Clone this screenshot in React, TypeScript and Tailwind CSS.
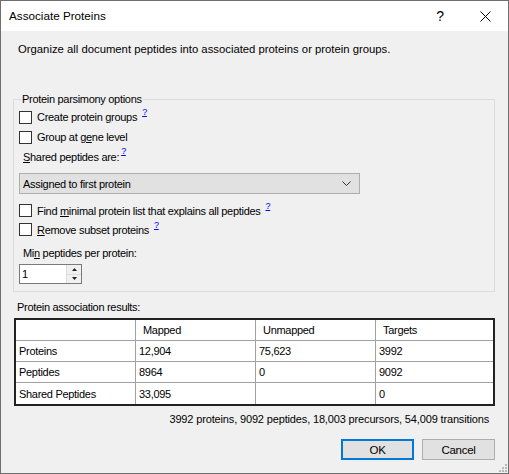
import React from 'react';

const Help: React.FC = () => (
  <span className="relative -top-[6px] ml-[5px] text-[9px] leading-none text-[#0000ff] underline">?</span>
);

const Check: React.FC<{ children: React.ReactNode; className?: string }> = ({ children, className }) => (
  <label className={`flex items-center ${className ?? ''}`}>
    <span className="w-[13px] h-[13px] bg-white border border-[#333333] shrink-0" />
    <span className="ml-[5px]">{children}</span>
  </label>
);

const rows = [
  ['', 'Mapped', 'Unmapped', 'Targets'],
  ['Proteins', '12,904', '75,623', '3992'],
  ['Peptides', '8964', '0', '9092'],
  ['Shared Peptides', '33,095', '', '0'],
];

const App: React.FC = () => {
  return (
    <div
      className="w-[509px] h-[474px] border border-[#6f6f6f] bg-[#f0f0f0] flex flex-col text-[11px] tracking-[-0.3px] leading-[14px] text-black relative"
      style={{ fontFamily: '"Liberation Sans", Arial, sans-serif' }}
    >
      {/* title bar */}
      <div className="h-[30px] bg-white flex items-center pl-[8px] shrink-0">
        <span className="text-[11.7px] tracking-normal">Associate Proteins</span>
        <span className="ml-auto mr-[36px] text-[14px] tracking-normal">?</span>
        <svg width="11" height="11" viewBox="0 0 11 11" className="mr-[17px]">
          <path d="M0.5 0.5 L10.5 10.5 M10.5 0.5 L0.5 10.5" stroke="#000" strokeWidth="1" />
        </svg>
      </div>

      <div className="flex flex-col pl-[12px] pr-[13px]">
        <div className="mt-[11px] ml-[5px] text-[11.3px] tracking-normal">Organize all document peptides into associated proteins or protein groups.</div>

        {/* group box */}
        <div className="relative mt-[43px] border border-[#dcdcdc] h-[193px] pl-[5px] pt-[7px] flex flex-col">
          <span className="absolute -top-[8px] left-[7px] px-[1px] bg-[#f0f0f0]">Protein parsimony options</span>
          <Check className="h-[20px]">
            Create protein <span className="underline">g</span>roups<Help />
          </Check>
          <Check className="h-[20px]">
            Group at g<span className="underline">e</span>ne level
          </Check>
          <div className="h-[20px] flex items-center pl-[4px]">
            <span><span className="underline">S</span>hared peptides are:</span>
            <span className="relative -top-[6px] ml-[2px] text-[9px] leading-none text-[#0000ff] underline">?</span>
          </div>
          <div className="mt-[6px] w-[341px] h-[21px] bg-[#e1e1e1] border border-[#adadad] flex items-center pl-[3px] pr-[8px]">
            <span>Assigned to first protein</span>
            <svg width="9" height="5" viewBox="0 0 9 5" className="ml-auto">
              <path d="M0.5 0.5 L4.5 4.5 L8.5 0.5" stroke="#333" fill="none" strokeWidth="1" />
            </svg>
          </div>
          <Check className="h-[19px] mt-[7px]">
            Find <span className="underline">m</span>inimal protein list that explains all peptides<Help />
          </Check>
          <Check className="h-[19px]">
            <span className="underline">R</span>emove subset proteins<Help />
          </Check>
          <div className="mt-[5px] h-[18px] flex items-center pl-[4px]">
            Mi<span className="underline">n</span>&nbsp;peptides per protein:
          </div>
          <div className="mt-[2px] w-[63px] h-[20px] bg-white border border-[#7a7a7a] flex">
            <span className="pl-[2px] flex items-center flex-1">1</span>
            <div className="w-[15px] flex flex-col border-l border-[#dcdcdc]">
              <div className="flex-1 flex items-center justify-center bg-[#f0f0f0] border-b border-[#dcdcdc]">
                <svg width="5" height="3" viewBox="0 0 5 3"><path d="M2.5 0 L5 3 L0 3 Z" fill="#222" /></svg>
              </div>
              <div className="flex-1 flex items-center justify-center bg-[#f0f0f0]">
                <svg width="5" height="3" viewBox="0 0 5 3"><path d="M0 0 L5 0 L2.5 3 Z" fill="#222" /></svg>
              </div>
            </div>
          </div>
        </div>

        <div className="mt-[8px] ml-[4px]">Protein association results:</div>

        {/* results table */}
        <div className="mt-[4px] ml-[1px] border-2 border-[#222222] bg-white grid grid-cols-[120px_120px_120px_1fr]">
          {rows.map((r, ri) =>
            r.map((c, ci) => (
              <div
                key={`${ri}-${ci}`}
                className={`h-[21px] flex items-center ${ri < 3 ? 'border-b border-[#a0a0a0]' : ''} ${ci < 3 ? 'border-r border-[#a0a0a0]' : ''} ${ri === 0 && ci > 0 ? 'pl-[7px]' : 'pl-[3px]'}`}
              >
                {c}
              </div>
            ))
          )}
        </div>

        <div className="mt-[6px] text-right pr-[6px] tracking-[-0.15px]">3992 proteins, 9092 peptides, 18,003 precursors, 54,009 transitions</div>

        <div className="mt-[13px] flex justify-end gap-[8px]">
          <button className="w-[73px] h-[21px] bg-[#e1e1e1] border-2 border-[#0078d7] text-[11.5px]">OK</button>
          <button className="w-[73px] h-[21px] bg-[#e1e1e1] border border-[#adadad] text-[11.5px]">Cancel</button>
        </div>
      </div>

      {/* size grip */}
      <svg width="10" height="10" viewBox="0 0 10 10" className="absolute right-[1px] bottom-[1px]">
        {[[8, 2], [8, 5], [5, 5], [8, 8], [5, 8], [2, 8]].map(([x, y], i) => (
          <rect key={i} x={x} y={y} width="2" height="2" fill="#b8b8b8" />
        ))}
      </svg>
    </div>
  );
};

export default App;
